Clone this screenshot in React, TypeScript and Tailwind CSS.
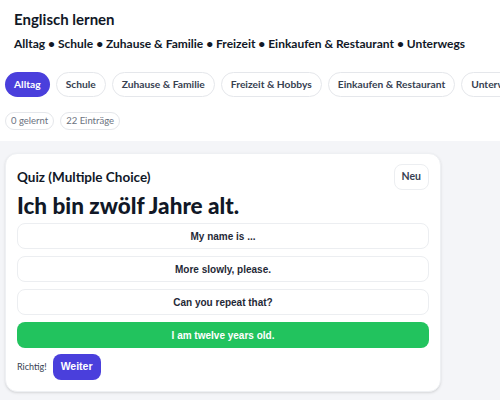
import React from "react";

const topics = [
  "Alltag",
  "Schule",
  "Zuhause & Familie",
  "Freizeit & Hobbys",
  "Einkaufen & Restaurant",
  "Unterwegs",
];

const options = [
  { text: "My name is ...", correct: false },
  { text: "More slowly, please.", correct: false },
  { text: "Can you repeat that?", correct: false },
  { text: "I am twelve years old.", correct: true },
];

const App = () => {
  return (
    <div className="min-h-[400px] w-[500px] overflow-hidden bg-[#f4f5f8] font-['Lato',sans-serif] text-[#1f2937]">
      <header className="bg-white pl-[14px] pt-[8px] pb-[11px]">
        <h1 className="text-[15px] font-bold leading-[22px] text-[#111827]">Englisch lernen</h1>
        <p className="mt-[5px] whitespace-nowrap text-[12px] font-bold leading-[18px] text-[#111827]">
          Alltag • Schule • Zuhause & Familie • Freizeit • Einkaufen & Restaurant • Unterwegs
        </p>
        <div className="-ml-[9px] mt-[19px] flex gap-[6px] whitespace-nowrap">
          {topics.map((t, i) => (
            <button
              key={t}
              className={
                i === 0
                  ? "h-[25px] shrink-0 rounded-full bg-[#4a3fdc] px-[9px] text-[10.25px] font-bold text-white"
                  : "h-[25px] shrink-0 rounded-full border border-[#e5e7eb] bg-white px-[9px] text-[10.25px] font-bold text-[#374151]"
              }
            >
              {t}
            </button>
          ))}
        </div>
        <div className="-ml-[9px] mt-[15px] flex gap-[6px]">
          <span className="rounded-full border border-[#e5e7eb] px-[5px] text-[9.5px] leading-[16px] text-[#6b7280]">0 gelernt</span>
          <span className="rounded-full border border-[#e5e7eb] px-[5px] text-[9.5px] leading-[16px] text-[#6b7280]">22 Einträge</span>
        </div>
      </header>
      <div className="px-[5px] pt-[12px]">
        <div className="w-[436px] rounded-[12px] border border-[#eef0f3] bg-white px-[11px] pt-[10px] pb-[11px] shadow-sm">
          <div className="flex items-start justify-between">
            <h2 className="mt-[4px] text-[13.5px] font-bold leading-[18px] text-[#111827]">Quiz (Multiple Choice)</h2>
            <button className="h-[26px] rounded-[8px] border border-[#eceef1] px-[7px] text-[10.5px] font-bold text-[#374151]">Neu</button>
          </div>
          <div className="mt-[2px] text-[22.5px] font-black leading-[28px] text-[#111827]">Ich bin zwölf Jahre alt.</div>
          <div className="mt-[3px] flex flex-col gap-[7px]">
            {options.map((o) => (
              <button
                key={o.text}
                className={
                  o.correct
                    ? "h-[26px] w-full rounded-[8px] bg-[#22c35e] font-['Liberation_Sans',sans-serif] text-[10px] font-bold text-white"
                    : "h-[26px] w-full rounded-[8px] border border-[#eceef1] bg-white font-['Liberation_Sans',sans-serif] text-[10px] font-bold text-[#1f2937]"
                }
              >
                {o.text}
              </button>
            ))}
          </div>
          <div className="mt-[6px] flex items-center gap-[6px]">
            <span className="text-[9px] text-[#374151]">Richtig!</span>
            <button className="h-[26px] rounded-[8px] bg-[#4a3fdc] px-[8px] font-['Liberation_Sans',sans-serif] text-[10.5px] font-bold text-white">Weiter</button>
          </div>
        </div>
      </div>
    </div>
  );
};

export default App;
